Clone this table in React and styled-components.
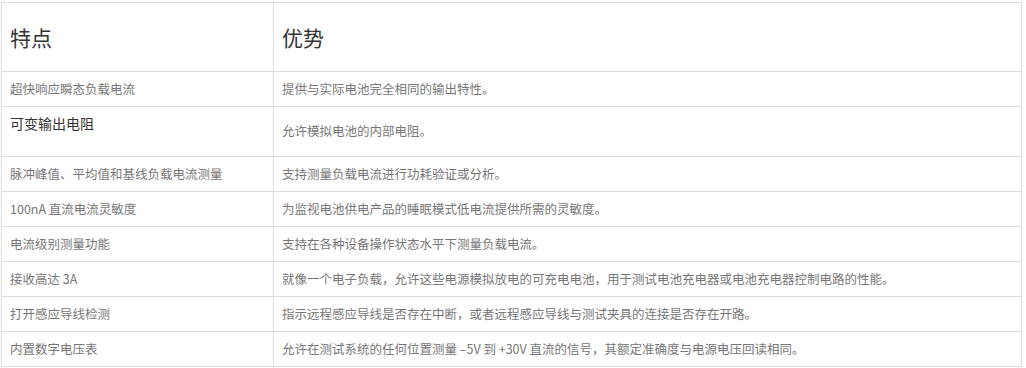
import React from "react";
import styled, { createGlobalStyle } from "styled-components";

const GlobalStyle = createGlobalStyle`
  html, body {
    margin: 0;
    padding: 0;
    background: #ffffff;
  }
  body {
    font-family: "Noto Sans CJK SC", "Noto Sans", sans-serif;
  }
`;

const Table = styled.table`
  width: 1021px;
  margin: 2px 0 0 1px;
  border-collapse: collapse;
  table-layout: fixed;
  font-size: 12.5px;
  line-height: 18px;
  color: #777777;
`;

const HeadCell = styled.th`
  border: 1px solid #dddddd;
  padding: 19px 8px;
  text-align: left;
  font-weight: 400;
  font-size: 21px;
  line-height: 30px;
  color: #333333;
  vertical-align: middle;
`;

const Cell = styled.td`
  border: 1px solid #dddddd;
  padding: ${(p) => (p.$tall ? "15px 8px 16px" : "8px 8px")};
  vertical-align: middle;
  white-space: nowrap;
`;

const TopCell = styled.td`
  border: 1px solid #dddddd;
  padding: 6px 8px 0;
  vertical-align: top;
`;

const Lead = styled.p`
  margin: 0;
  font-size: 14px;
  line-height: 20px;
  color: #333333;
`;

const rows = [
  ["超快响应瞬态负载电流", "提供与实际电池完全相同的输出特性。"],
  ["可变输出电阻", "允许模拟电池的内部电阻。", true],
  ["脉冲峰值、平均值和基线负载电流测量", "支持测量负载电流进行功耗验证或分析。"],
  ["100nA 直流电流灵敏度", "为监视电池供电产品的睡眠模式低电流提供所需的灵敏度。"],
  ["电流级别测量功能", "支持在各种设备操作状态水平下测量负载电流。"],
  [
    "接收高达 3A",
    "就像一个电子负载，允许这些电源模拟放电的可充电电池，用于测试电池充电器或电池充电器控制电路的性能。",
  ],
  [
    "打开感应导线检测",
    "指示远程感应导线是否存在中断，或者远程感应导线与测试夹具的连接是否存在开路。",
  ],
  [
    "内置数字电压表",
    "允许在测试系统的任何位置测量 –5V 到 +30V 直流的信号，其额定准确度与电源电压回读相同。",
  ],
];

export default function App() {
  return (
    <>
      <GlobalStyle />
      <Table>
        <colgroup>
          <col style={{ width: 272 }} />
          <col />
        </colgroup>
        <thead>
          <tr>
            <HeadCell>特点</HeadCell>
            <HeadCell>优势</HeadCell>
          </tr>
        </thead>
        <tbody>
          {rows.map(([feature, benefit, lead]) => (
            <tr key={feature}>
              {lead ? (
                <TopCell>
                  <Lead>{feature}</Lead>
                </TopCell>
              ) : (
                <Cell>{feature}</Cell>
              )}
              <Cell $tall={lead}>{benefit}</Cell>
            </tr>
          ))}
        </tbody>
      </Table>
    </>
  );
}
